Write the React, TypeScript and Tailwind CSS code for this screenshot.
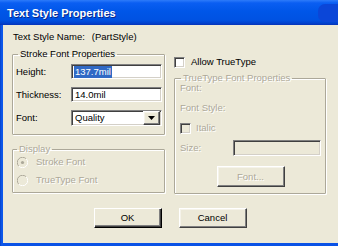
import type { ReactNode } from "react";

const sunken =
  "border border-t-[#808080] border-l-[#808080] border-r-white border-b-white shadow-[inset_1px_1px_0_#404040,inset_-1px_-1px_0_#D4D0C8]";
const raised =
  "border border-t-white border-l-white border-r-[#404040] border-b-[#404040] shadow-[inset_-1px_-1px_0_#808080,inset_1px_1px_0_#F5F3EA]";
const groupBox =
  "rounded-[1px] border border-[#ACA899] shadow-[1px_1px_0_#fff,inset_1px_1px_0_#fff]";
const dim = "text-[#ACA899] [text-shadow:1px_1px_0_#fff]";

function Radio({ checked = false }: { checked?: boolean }) {
  return (
    <svg width="11" height="11" viewBox="0 0 11 11" className="shrink-0">
      <path d="M9.2 1.8 A5 5 0 0 0 1.8 9.2" fill="none" stroke="#ACA899" strokeWidth="1" />
      <path d="M1.8 9.2 A5 5 0 0 0 9.2 1.8" fill="none" stroke="#ffffff" strokeWidth="1" />
      <circle cx="5.5" cy="5.5" r="3.6" fill="#ECE9D8" />
      {checked && <circle cx="5.5" cy="5.5" r="1.6" fill="#ACA899" />}
    </svg>
  );
}

function Check({ disabled = false }: { disabled?: boolean }) {
  return (
    <span
      className={`block h-[11px] w-[11px] shrink-0 ${sunken} ${disabled ? "bg-[#ECE9D8]" : "bg-white"}`}
    />
  );
}

function Group({ title, titleClass, children, className = "" }: { title: string; titleClass: string; children: ReactNode; className?: string }) {
  return (
    <fieldset className={`${groupBox} ${className}`}>
      <legend className={`px-[2px] leading-[12px] ${titleClass}`}>{title}</legend>
      {children}
    </fieldset>
  );
}

function Field({ label, children }: { label: string; children: ReactNode }) {
  return (
    <div className="flex items-center pl-[3px]">
      <span className="w-[55px]">{label}</span>
      {children}
    </div>
  );
}

export default function App() {
  return (
    <div className="flex h-[246px] w-[338px] flex-col overflow-hidden bg-[#0A3FD1] font-['Liberation_Sans',Arial,sans-serif] text-[9.5px] leading-[12px] text-black">
      <div className="flex h-[25px] shrink-0 items-center bg-[linear-gradient(180deg,#2D7BFA_0%,#0A5EF2_12%,#0056E8_45%,#0052E2_80%,#0143CF_92%,#0733B8_100%)] pl-[7px]">
        <span className="text-[11px] font-bold text-white [text-shadow:1px_1px_0_#0A2A8C]">Text Style Properties</span>
        <span className="ml-auto mt-[1px] h-[18px] w-[20px] rounded-l-[7px] bg-[#0B46D8]" />
      </div>

      <div className="flex flex-1 bg-[linear-gradient(90deg,#0640C8_0px,#0E5CF0_2px,#0A52E6_3px)] pb-[3px] pl-[3px]">
        <div className="flex flex-1 flex-col bg-[#ECE9D8] pl-[9px] pr-[12px] pt-[6px]">
          <div className="flex pl-[1px]">
            <span>Text Style Name:</span>
            <span className="ml-[7px]">(PartStyle)</span>
          </div>

          <div className="mt-[5px] flex gap-[9px]">
            <div className="flex w-[153px] flex-col">
              <Group title="Stroke Font Properties" titleClass="ml-[5px]">
                <div className="flex flex-col gap-[8px] pb-[8px] pr-[2px] pt-[4px]">
                  <Field label="Height:">
                    <div className={`flex h-[15px] w-[91px] items-center bg-white pl-[2px] ${sunken}`}>
                      <span className="bg-[#316AC5] px-[1px] text-white">137.7mil</span>
                    </div>
                  </Field>
                  <Field label="Thickness:">
                    <div className={`flex h-[15px] w-[91px] items-center bg-white pl-[3px] ${sunken}`}>14.0mil</div>
                  </Field>
                  <Field label="Font:">
                    <div className={`flex h-[16px] w-[91px] items-center bg-white pl-[3px] ${sunken}`}>
                      <span className="flex-1">Quality</span>
                      <span className={`mr-[1px] flex h-[14px] w-[17px] items-center justify-center bg-[#ECE9D8] ${raised}`}>
                        <svg width="7" height="4" viewBox="0 0 7 4">
                          <path d="M0 0h7L3.5 4z" fill="#000" />
                        </svg>
                      </span>
                    </div>
                  </Field>
                </div>
              </Group>

              <Group title="Display" titleClass={`ml-[4px] ${dim}`} className="mt-[8px]">
                <div className={`flex flex-col gap-[6px] pb-[6px] pl-[4px] pt-[1px] ${dim}`}>
                  <div className="flex items-center gap-[8px]">
                    <Radio checked />
                    <span>Stroke Font</span>
                  </div>
                  <div className="flex items-center gap-[8px]">
                    <Radio />
                    <span>TrueType Font</span>
                  </div>
                </div>
              </Group>
            </div>

            <div className="flex w-[152px] flex-col">
              <div className="mt-[8px] flex items-center gap-[6px]">
                <Check />
                <span>Allow TrueType</span>
              </div>

              <Group title="TrueType Font Properties" titleClass={`ml-[6px] ${dim}`} className="mt-[4px]">
                <div className={`-mt-[6px] flex flex-col pb-[6px] pl-[5px] ${dim}`}>
                  <div className="flex h-[20px] items-center">Font:</div>
                  <div className="flex h-[20px] items-center">Font Style:</div>
                  <div className="flex h-[20px] items-center gap-[5px]">
                    <Check disabled />
                    <span>Italic</span>
                  </div>
                  <div className="flex h-[20px] items-center">
                    <span className="w-[53px]">Size:</span>
                    <span className={`block h-[16px] w-[88px] bg-[#ECE9D8] ${sunken}`} />
                  </div>
                  <div className="mt-[8px] flex justify-center pr-[4px]">
                    <span className={`flex h-[21px] w-[68px] items-center justify-center bg-[#ECE9D8] ${raised}`}>Font...</span>
                  </div>
                </div>
              </Group>
            </div>
          </div>

          <div className="mt-[14px] flex justify-center gap-[17px] pl-[2px]">
            <span className="flex h-[20px] w-[68px] items-center justify-center border border-t-white border-l-white border-r-black border-b-black bg-[#ECE9D8] shadow-[inset_-1px_-1px_0_#404040,inset_-2px_-2px_0_#808080]">
              OK
            </span>
            <span className={`flex h-[20px] w-[68px] items-center justify-center bg-[#ECE9D8] ${raised}`}>Cancel</span>
          </div>
        </div>
      </div>
    </div>
  );
}
